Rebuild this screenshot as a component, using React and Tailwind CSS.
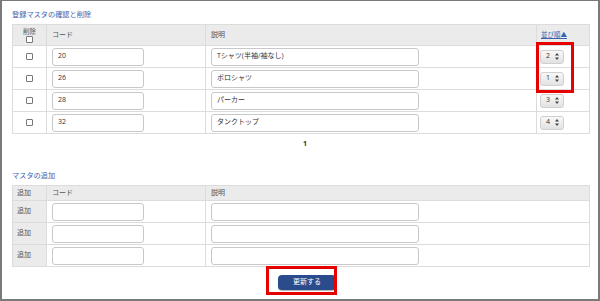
import React from 'react';

const font = { fontFamily: '"Open Sans", "Noto Sans CJK JP", sans-serif' };

const rows = [
    { code: '20', desc: 'Tシャツ(半袖/袖なし)', order: '2' },
    { code: '26', desc: 'ポロシャツ', order: '1' },
    { code: '28', desc: 'パーカー', order: '3' },
    { code: '32', desc: 'タンクトップ', order: '4' },
];

const Check = () => (
    <span className="inline-block w-[7px] h-[7px] border border-[#777] rounded-[1px] bg-white" />
);

const TextBox = ({ value = '', w }) => (
    <div className={`${w} h-[18px] border border-[#c8c8c8] rounded-[3px] bg-white flex items-center px-[5px] text-[7px] text-[#333]`}>
        {value}
    </div>
);

const SortSelect = ({ value }) => (
    <div className="w-[24px] h-[14px] rounded-[3px] border border-[#d0d0d0] bg-gradient-to-b from-[#f8f8f8] to-[#e2e2e2] flex items-center justify-between pl-[5px] pr-[4px] text-[7px] text-[#333]">
        <span>{value}</span>
        <svg width="4" height="7" viewBox="0 0 4 7">
            <path d="M2 0 L4 2.6 L0 2.6 Z M2 7 L4 4.4 L0 4.4 Z" fill="#444" />
        </svg>
    </div>
);

export default function App() {
    return (
        <div style={font} className="relative w-[600px] h-[301px] bg-white border-t border-l-2 border-r-2 border-b-2 border-[#7a7a7a] pl-[10px] pr-[10px] box-border overflow-hidden">
            {/* 登録マスタ */}
            <div className="h-[23px] pt-[8px] text-[7.2px] leading-[10px] text-[#3b62ad]">登録マスタの確認と削除</div>
            <table className="table-fixed border-collapse w-[577px] text-[7px] text-[#555]">
                <colgroup>
                    <col className="w-[34px]" />
                    <col className="w-[159px]" />
                    <col className="w-[331px]" />
                    <col className="w-[53px]" />
                </colgroup>
                <thead>
                    <tr className="h-[21px] bg-[#ebebeb]">
                        <th className="border border-[#dcdcdc] font-normal text-center align-middle">
                            <div className="flex flex-col items-center leading-[8px]">
                                <span className="text-[6.5px]">削除</span>
                                <Check />
                            </div>
                        </th>
                        <th className="border border-[#dcdcdc] font-normal text-left pl-[5px]">コード</th>
                        <th className="border border-[#dcdcdc] font-normal text-left pl-[5px]">説明</th>
                        <th className="border border-[#dcdcdc] font-normal text-left pl-[4px]">
                            <span className="underline text-[#3b62ad] text-[6.5px]">並び順▲</span>
                        </th>
                    </tr>
                </thead>
                <tbody>
                    {rows.map((r) => (
                        <tr key={r.code} className="h-[22px]">
                            <td className="border border-[#dcdcdc] text-center align-middle">
                                <div className="flex justify-center"><Check /></div>
                            </td>
                            <td className="border border-[#dcdcdc] pl-[5px]">
                                <TextBox value={r.code} w="w-[92px]" />
                            </td>
                            <td className="border border-[#dcdcdc] pl-[5px]">
                                <TextBox value={r.desc} w="w-[208px]" />
                            </td>
                            <td className="border border-[#dcdcdc] pl-[3px]">
                                <SortSelect value={r.order} />
                            </td>
                        </tr>
                    ))}
                </tbody>
            </table>

            <div className="h-[21px] flex items-center justify-center pl-[10px] text-[7px] font-bold text-[#333]">1</div>

            {/* マスタの追加 */}
            <div className="h-[30px] pt-[15px] text-[7.2px] leading-[10px] text-[#3b62ad]">マスタの追加</div>
            <table className="table-fixed border-collapse w-[577px] text-[7px] text-[#555]">
                <colgroup>
                    <col className="w-[34px]" />
                    <col className="w-[159px]" />
                    <col className="w-[384px]" />
                </colgroup>
                <thead>
                    <tr className="h-[15px] bg-[#ebebeb]">
                        <th className="border border-[#dcdcdc] font-normal text-left pl-[4px]">追加</th>
                        <th className="border border-[#dcdcdc] font-normal text-left pl-[5px]">コード</th>
                        <th className="border border-[#dcdcdc] font-normal text-left pl-[5px]">説明</th>
                    </tr>
                </thead>
                <tbody>
                    {[0, 1, 2].map((i) => (
                        <tr key={i} className="h-[22px]">
                            <td className="border border-[#dcdcdc] bg-[#ebebeb] pl-[4px]">追加</td>
                            <td className="border border-[#dcdcdc] pl-[5px]">
                                <TextBox w="w-[92px]" />
                            </td>
                            <td className="border border-[#dcdcdc] pl-[5px]">
                                <TextBox w="w-[208px]" />
                            </td>
                        </tr>
                    ))}
                </tbody>
            </table>

            <div className="flex justify-center pt-[8px] pl-[14px]">
                <button className="w-[58px] h-[15px] rounded-[4px] bg-[#2b4c8c] text-white text-[7px] flex items-center justify-center shadow-[0_1px_1px_rgba(0,0,0,0.3)]">
                    更新する
                </button>
            </div>

            {/* annotation boxes */}
            <div className="absolute left-[534px] top-[41px] w-[38px] h-[51px] border-[3px] border-[#e60000]" />
            <div className="absolute left-[264px] top-[265px] w-[71px] h-[29px] border-[3px] border-[#e60000]" />
        </div>
    );
}
